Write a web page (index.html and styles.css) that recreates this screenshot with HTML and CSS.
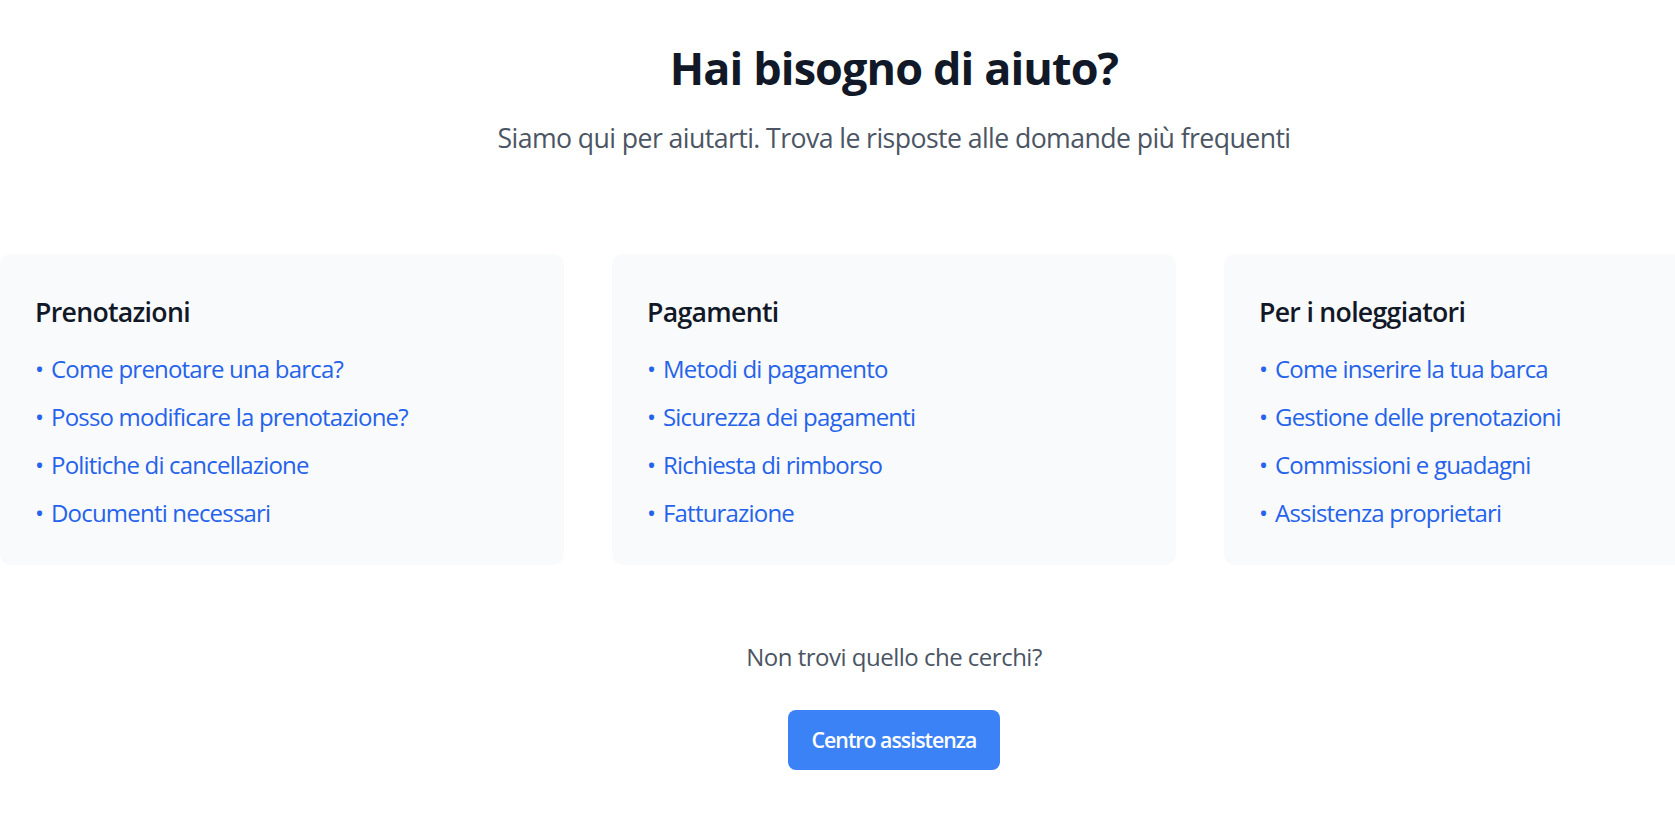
FILE: index.html
```html
<!DOCTYPE html>
<html lang="it">
<head>
<meta charset="utf-8">
<title>Hai bisogno di aiuto?</title>
<link rel="stylesheet" href="styles.css">
</head>
<body>
<section class="help">
  <header class="help-head">
    <h1 class="help-title">Hai bisogno di aiuto?</h1>
    <p class="help-sub">Siamo qui per aiutarti. Trova le risposte alle domande più frequenti</p>
  </header>
  <div class="cards">
    <div class="card">
      <h3 class="card-title">Prenotazioni</h3>
      <ul class="card-list">
        <li><a href="#"><span class="dot">•</span>Come prenotare una barca?</a></li>
        <li><a href="#"><span class="dot">•</span>Posso modificare la prenotazione?</a></li>
        <li><a href="#"><span class="dot">•</span>Politiche di cancellazione</a></li>
        <li><a href="#"><span class="dot">•</span>Documenti necessari</a></li>
      </ul>
    </div>
    <div class="card">
      <h3 class="card-title">Pagamenti</h3>
      <ul class="card-list">
        <li><a href="#"><span class="dot">•</span>Metodi di pagamento</a></li>
        <li><a href="#"><span class="dot">•</span>Sicurezza dei pagamenti</a></li>
        <li><a href="#"><span class="dot">•</span>Richiesta di rimborso</a></li>
        <li><a href="#"><span class="dot">•</span>Fatturazione</a></li>
      </ul>
    </div>
    <div class="card">
      <h3 class="card-title">Per i noleggiatori</h3>
      <ul class="card-list">
        <li><a href="#"><span class="dot">•</span>Come inserire la tua barca</a></li>
        <li><a href="#"><span class="dot">•</span>Gestione delle prenotazioni</a></li>
        <li><a href="#"><span class="dot">•</span>Commissioni e guadagni</a></li>
        <li><a href="#"><span class="dot">•</span>Assistenza proprietari</a></li>
      </ul>
    </div>
  </div>
  <div class="help-foot">
    <p class="foot-text">Non trovi quello che cerchi?</p>
    <a href="#" class="btn">Centro assistenza</a>
  </div>
</section>
</body>
</html>
```

FILE: styles.css
```css
html {
  overflow: hidden;
}
body {
  margin: 0;
  background: #ffffff;
  font-family: "Open Sans", "Noto Sans", sans-serif;
}
.help {
  width: 1788px;
  padding-top: 41px;
  text-align: center;
}
.help-title {
  margin: 0;
  font-size: 45px;
  line-height: 53px;
  font-weight: 700;
  color: #111827;
  letter-spacing: -0.9px;
}
.help-sub {
  margin: 25px 0 0;
  font-size: 26.67px;
  line-height: 37px;
  color: #4b5563;
  letter-spacing: -0.58px;
}
.cards {
  margin-top: 98px;
  display: grid;
  grid-template-columns: repeat(3, 564px);
  column-gap: 48px;
  text-align: left;
}
.card {
  background: #f9fafb;
  border-radius: 11px;
  padding: 39px 35px 33px;
  height: 311px;
  box-sizing: border-box;
}
.card-title {
  margin: 0 0 20px;
  font-size: 26.67px;
  line-height: 37px;
  font-weight: 600;
  color: #111827;
  letter-spacing: -0.7px;
}
.card-list {
  list-style: none;
  margin: 0;
  padding: 0;
  display: flex;
  flex-direction: column;
  gap: 10.67px;
}
.card-list li {
  font-size: 24px;
  line-height: 37.33px;
}
.card-list a {
  color: #2563eb;
  text-decoration: none;
  letter-spacing: -0.8px;
}
.dot {
  display: inline-block;
  width: 16px;
  letter-spacing: 0;
}
.help-foot {
  margin-top: 73px;
  display: flex;
  flex-direction: column;
  align-items: center;
}
.foot-text {
  margin: 0;
  font-size: 24px;
  line-height: 37.33px;
  color: #4b5563;
  letter-spacing: -0.5px;
}
.btn {
  margin-top: 35px;
  display: block;
  width: 212px;
  height: 60px;
  box-sizing: border-box;
  background: #3b82f6;
  color: #ffffff;
  border-radius: 8px;
  font-size: 21.33px;
  line-height: 60px;
  font-weight: 600;
  text-align: center;
  text-decoration: none;
  letter-spacing: -1px;
}
```
